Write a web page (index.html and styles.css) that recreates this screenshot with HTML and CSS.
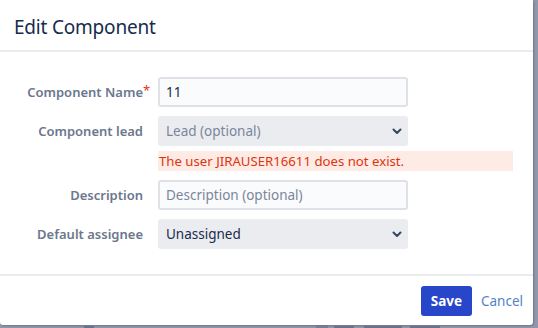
FILE: index.html
```html
<!DOCTYPE html>
<html lang="en">
<head>
<meta charset="utf-8">
<title>Edit Component</title>
<link rel="stylesheet" href="styles.css">
</head>
<body>
<div class="dialog">
  <div class="dialog-header">
    <h2 class="dialog-title">Edit Component</h2>
  </div>
  <form class="dialog-body">
    <label class="field-label" for="name">Component Name<span class="req">*</span></label>
    <div class="field"><input class="text-input" id="name" type="text" value="11"></div>

    <label class="field-label">Component lead</label>
    <div class="field">
      <div class="select placeholder"><span>Lead (optional)</span>
        <svg class="chev" width="10" height="7" viewBox="0 0 10 7"><path d="M1.5 1.5 L5 5 L8.5 1.5" fill="none" stroke="#344563" stroke-width="2" stroke-linecap="round" stroke-linejoin="round"/></svg>
      </div>
    </div>

    <div class="error-row">The user JIRAUSER16611 does not exist.</div>

    <label class="field-label" for="desc">Description</label>
    <div class="field"><input class="text-input" id="desc" type="text" placeholder="Description (optional)"></div>

    <label class="field-label">Default assignee</label>
    <div class="field">
      <div class="select"><span>Unassigned</span>
        <svg class="chev" width="10" height="7" viewBox="0 0 10 7"><path d="M1.5 1.5 L5 5 L8.5 1.5" fill="none" stroke="#344563" stroke-width="2" stroke-linecap="round" stroke-linejoin="round"/></svg>
      </div>
    </div>
  </form>
  <div class="dialog-footer">
    <button class="btn-primary" type="button">Save</button>
    <a class="link" href="#">Cancel</a>
  </div>
</div>
<div class="page-behind">
  <span class="ghost g1"></span>
  <span class="ghost g2"></span>
  <span class="ghost g3"></span>
  <span class="ghost g4"></span>
  <span class="ghost g5"></span>
</div>
</body>
</html>
```

FILE: styles.css
```css
html, body {
  margin: 0;
  padding: 0;
}
body {
  background: #9297a9;
  font-family: "Noto Sans", "Open Sans", sans-serif;
  font-size: 14px;
  color: #172b4d;
  width: 538px;
  height: 328px;
  overflow: hidden;
}
.dialog {
  width: 533px;
  height: 325px;
  background: #ffffff;
  border-radius: 0 0 3px 3px;
  box-shadow: 1px 1px 2px rgba(9, 30, 66, 0.25);
  display: flex;
  flex-direction: column;
}
.dialog-header {
  height: 50px;
  border-bottom: 2px solid #ebecf0;
  display: flex;
  align-items: center;
  padding: 0 14px;
  box-sizing: content-box;
}
.dialog-title {
  margin: 0;
  font-size: 19px;
  font-weight: 400;
  color: #172b4d;
  letter-spacing: -0.2px;
  padding-top: 4px;
}
.dialog-body {
  margin: 0;
  padding: 25px 0 25px 0;
  display: grid;
  grid-template-columns: 143px 355px;
  column-gap: 15px;
  row-gap: 9px;
  align-items: center;
  border-bottom: 2px solid #ebecf0;
}
.field-label {
  text-align: right;
  font-weight: 600;
  font-size: 13px;
  color: #6b778c;
  position: relative;
  white-space: nowrap;
}
.req {
  position: absolute;
  left: 100%;
  top: -2px;
  color: #de350b;
  font-weight: 400;
  font-size: 13px;
}
.field {
  display: flex;
}
.text-input {
  box-sizing: border-box;
  width: 250px;
  height: 30px;
  margin: 0;
  padding: 0 6px;
  border: 2px solid #dfe1e6;
  border-radius: 3px;
  background: #fafbfc;
  font-family: inherit;
  font-size: 13.5px;
  color: #172b4d;
  outline: none;
}
.text-input::placeholder {
  color: #7a869a;
  opacity: 1;
}
.select {
  box-sizing: border-box;
  width: 250px;
  height: 30px;
  padding: 0 6px 0 8px;
  border-radius: 3px;
  background: #ebecf0;
  display: flex;
  align-items: center;
  justify-content: space-between;
  font-size: 13.5px;
  color: #172b4d;
}
.select.placeholder {
  color: #7a869a;
}
.chev {
  display: block;
  margin-top: 1px;
}
.error-row {
  grid-column: 2;
  margin-top: -4px;
  height: 20px;
  line-height: 20px;
  background: #ffebe6;
  color: #de350b;
  font-size: 13.2px;
  padding-left: 1px;
}
.dialog-footer {
  flex: 1;
  display: flex;
  align-items: center;
  justify-content: flex-end;
  gap: 9px;
  padding: 0 10px 0 0;
}
.btn-primary {
  height: 30px;
  width: 51px;
  border: none;
  border-radius: 3px;
  background: #2846c9;
  color: #ffffff;
  font-family: inherit;
  font-weight: 700;
  font-size: 13.5px;
  padding: 0;
}
.link {
  color: #5383c6;
  text-decoration: none;
  font-size: 13.5px;
}
.page-behind {
  height: 3px;
  display: flex;
  align-items: flex-end;
}
.ghost {
  display: block;
  height: 2px;
  background: #5a6585;
  opacity: 0.7;
}
.g1 { margin-left: 84px; width: 10px; }
.g2 { margin-left: 222px; width: 12px; height: 3px; background: #6e7590; }
.g3 { margin-left: 6px; width: 20px; }
.g4 { margin-left: 10px; width: 38px; }
.g5 { margin-left: 8px; width: 30px; }
```
